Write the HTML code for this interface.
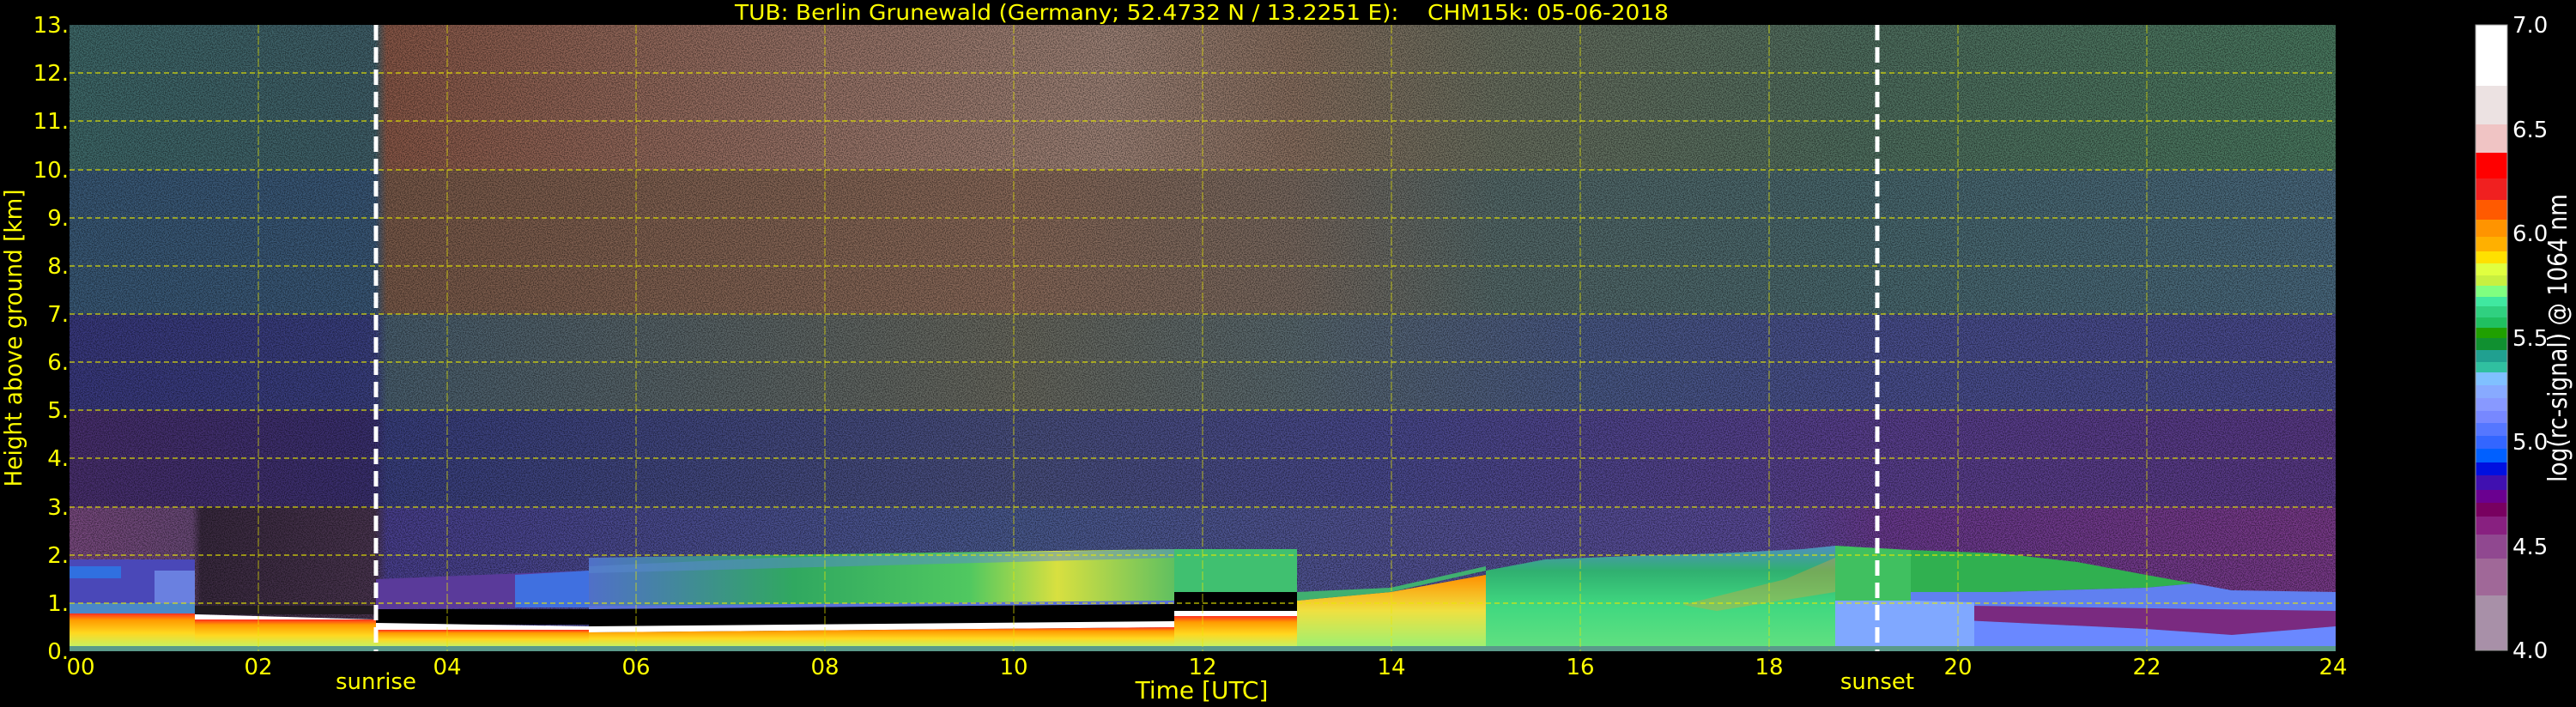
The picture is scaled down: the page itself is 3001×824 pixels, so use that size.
<!DOCTYPE html>
<html><head><meta charset="utf-8"><style>
html,body{margin:0;padding:0;background:#000;width:3001px;height:824px;overflow:hidden}
svg{display:block}
text{font-family:"DejaVu Sans","Liberation Sans",sans-serif}
</style></head><body>
<svg width="3001" height="824" viewBox="0 0 3001 824" xmlns="http://www.w3.org/2000/svg">
<defs>
<linearGradient id="b1" x1="0" x2="1" y1="0" y2="0">
<stop offset="0" stop-color="#3f6a6a"/><stop offset=".135" stop-color="#40606a"/><stop offset=".14" stop-color="#8a5848"/><stop offset=".33" stop-color="#9a7468"/><stop offset=".46" stop-color="#a08478"/><stop offset=".54" stop-color="#8a7060"/><stop offset=".63" stop-color="#6a7060"/><stop offset=".79" stop-color="#507060"/><stop offset="1" stop-color="#4a7a60"/></linearGradient>
<linearGradient id="b2" x1="0" x2="1" y1="0" y2="0">
<stop offset="0" stop-color="#3a5a78"/><stop offset=".135" stop-color="#3a5878"/><stop offset=".14" stop-color="#7a5a4a"/><stop offset=".42" stop-color="#8a6a5a"/><stop offset=".54" stop-color="#7a6a60"/><stop offset=".63" stop-color="#556a6a"/><stop offset=".79" stop-color="#4a6a70"/><stop offset="1" stop-color="#4a6a80"/></linearGradient>
<linearGradient id="b3" x1="0" x2="1" y1="0" y2="0">
<stop offset="0" stop-color="#3a3a80"/><stop offset=".135" stop-color="#3a4080"/><stop offset=".14" stop-color="#4a6070"/><stop offset=".42" stop-color="#6a6a60"/><stop offset=".54" stop-color="#5a6a70"/><stop offset=".67" stop-color="#4a5a88"/><stop offset=".79" stop-color="#4a5090"/><stop offset="1" stop-color="#4a4a90"/></linearGradient>
<linearGradient id="b4" x1="0" x2="1" y1="0" y2="0">
<stop offset="0" stop-color="#4a3070"/><stop offset=".135" stop-color="#3a3070"/><stop offset=".14" stop-color="#3a4080"/><stop offset=".42" stop-color="#4a5080"/><stop offset=".58" stop-color="#4a4a90"/><stop offset=".79" stop-color="#5a4090"/><stop offset="1" stop-color="#5a3a88"/></linearGradient>
<linearGradient id="b5" x1="0" x2="1" y1="0" y2="0">
<stop offset="0" stop-color="#7a4a80"/><stop offset=".054" stop-color="#6a4a78"/><stop offset=".058" stop-color="#3a2a40"/><stop offset=".135" stop-color="#4a3550"/><stop offset=".14" stop-color="#4a4090"/><stop offset=".42" stop-color="#4a5a90"/><stop offset=".75" stop-color="#5a4a9a"/><stop offset=".8" stop-color="#6a3a90"/><stop offset="1" stop-color="#7a3a8a"/></linearGradient>
<linearGradient id="aer" x1="0" x2="0" y1="0" y2="1">
<stop offset="0" stop-color="#ff3020"/><stop offset=".2" stop-color="#ff9a00"/><stop offset=".6" stop-color="#ffd820"/><stop offset="1" stop-color="#c8f060"/></linearGradient>
<linearGradient id="aer2" x1="0" x2="0" y1="0" y2="1">
<stop offset="0" stop-color="#ff9000"/><stop offset=".5" stop-color="#f0e040"/><stop offset="1" stop-color="#a0f070"/></linearGradient>
<linearGradient id="grn" x1="0" x2="0" y1="0" y2="1">
<stop offset="0" stop-color="#5090c0"/><stop offset=".25" stop-color="#30b070"/><stop offset=".6" stop-color="#40d880"/><stop offset="1" stop-color="#60e080"/></linearGradient>
<linearGradient id="mid" x1="0" x2="1" y1="0" y2="0">
<stop offset="0" stop-color="#5070c8"/><stop offset=".35" stop-color="#30a860"/><stop offset=".65" stop-color="#50c860"/><stop offset=".8" stop-color="#d8e040"/><stop offset="1" stop-color="#60c060"/></linearGradient>
<filter id="nz" x="0" y="0" width="100%" height="100%"><feTurbulence type="fractalNoise" baseFrequency="0.8" numOctaves="1" seed="3"/><feColorMatrix values="0 0 0 0 0  0 0 0 0 0  0 0 0 0 0  0 0 0 -3 1.9"/></filter>
</defs>

<rect x="81" y="29" width="2640" height="169" fill="url(#b1)"/>
<rect x="81" y="198" width="2640" height="168" fill="url(#b2)"/>
<rect x="81" y="366" width="2640" height="112" fill="url(#b3)"/>
<rect x="81" y="478" width="2640" height="113" fill="url(#b4)"/>
<rect x="81" y="591" width="2640" height="168" fill="url(#b5)"/>
<rect x="81" y="29" width="2640" height="730" filter="url(#nz)" opacity="0.45"/>

<rect x="81" y="652" width="146" height="51" fill="#4a48b8"/>
<rect x="81" y="660" width="60" height="14" fill="#3070e0"/>
<rect x="180" y="665" width="47" height="38" fill="#6a80e0"/>
<rect x="81" y="703" width="146" height="12" fill="#4a88c8"/>
<rect x="81" y="715" width="146" height="38" fill="url(#aer)"/>
<rect x="227" y="706" width="211" height="10" fill="#201a20"/>
<polygon points="227,716 438,722 438,728 227,722" fill="#ffffff"/>
<rect x="227" y="722" width="211" height="31" fill="url(#aer)"/>
<polygon points="438,675 686,665 686,708 438,710" fill="#5a3a9a"/>
<polygon points="600,670 686,665 686,708 600,708" fill="#4070e0"/>
<rect x="438" y="710" width="248" height="18" fill="#000"/>
<polygon points="438,726 686,730 686,738 438,734" fill="#fff"/>
<rect x="438" y="734" width="248" height="19" fill="url(#aer)"/>
<polygon points="686,650 1368,640 1368,703 686,708" fill="url(#mid)"/>
<polygon points="686,660 900,650 1368,640 1368,650 686,668" fill="#5a8ad0" opacity=".5"/>
<polygon points="686,706 1368,700 1368,704 686,710" fill="#5a70d8"/>
<polygon points="686,710 1368,704 1368,727 686,733" fill="#000"/>
<polygon points="686,730 1368,724 1368,731 686,737" fill="#fff"/>
<polygon points="686,737 1368,731 1368,753 686,753" fill="url(#aer)"/>
<polygon points="1368,640 1511,640 1511,700 1368,700" fill="#40c070"/>
<rect x="1368" y="690" width="143" height="30" fill="#000"/>
<rect x="1368" y="712" width="143" height="6" fill="#fff"/>
<rect x="1368" y="718" width="143" height="35" fill="url(#aer)"/>
<polygon points="1511,700 1620,690 1731,670 1731,753 1511,753" fill="url(#aer2)"/>
<polygon points="1511,700 1620,690 1731,665 1731,660 1620,685 1511,690" fill="#40b070"/>
<polygon points="1731,665 1800,652 1900,648 2000,645 2100,640 2138,636 2138,753 1731,753" fill="url(#grn)"/>
<polygon points="1960,705 2080,675 2138,650 2138,690 2000,712" fill="#f0a030" opacity=".35"/>
<polygon points="2138,636 2226,641 2226,700 2138,700" fill="#40c060"/>
<rect x="2138" y="700" width="88" height="53" fill="#80a8ff"/>
<polygon points="2226,641 2330,645 2420,655 2500,670 2556,680 2500,685 2330,690 2226,690" fill="#30b050"/>
<polygon points="2226,690 2330,690 2500,685 2556,680 2600,688 2721,690 2721,715 2226,712" fill="#6080f0"/>
<polygon points="2226,705 2721,712 2721,730 2600,740 2500,733 2330,725 2226,720" fill="#7a2a80"/>
<polygon points="2226,720 2330,725 2500,733 2600,740 2721,730 2721,753 2226,753" fill="#6a88ff"/>
<polygon points="2226,700 2300,702 2300,753 2226,753" fill="#80a8ff"/>
<rect x="81" y="753" width="2640" height="6" fill="#5a9a8a"/>

<g stroke="#e8e800" stroke-width="1.2" stroke-dasharray="6,4" fill="none" opacity=".9">
<line x1="81" x2="2721" y1="703" y2="703"/><line x1="81" x2="2721" y1="647" y2="647"/>
<line x1="81" x2="2721" y1="591" y2="591"/><line x1="81" x2="2721" y1="534" y2="534"/>
<line x1="81" x2="2721" y1="478" y2="478"/><line x1="81" x2="2721" y1="422" y2="422"/>
<line x1="81" x2="2721" y1="366" y2="366"/><line x1="81" x2="2721" y1="310" y2="310"/>
<line x1="81" x2="2721" y1="254" y2="254"/><line x1="81" x2="2721" y1="198" y2="198"/>
<line x1="81" x2="2721" y1="141" y2="141"/><line x1="81" x2="2721" y1="85" y2="85"/>
</g>
<g stroke="#e8e800" stroke-width="1" stroke-dasharray="10,3" fill="none" opacity=".7">
<line x1="301" x2="301" y1="29" y2="759"/><line x1="521" x2="521" y1="29" y2="759"/>
<line x1="741" x2="741" y1="29" y2="759"/><line x1="961" x2="961" y1="29" y2="759"/>
<line x1="1181" x2="1181" y1="29" y2="759"/><line x1="1401" x2="1401" y1="29" y2="759"/>
<line x1="1621" x2="1621" y1="29" y2="759"/><line x1="1841" x2="1841" y1="29" y2="759"/>
<line x1="2061" x2="2061" y1="29" y2="759"/><line x1="2281" x2="2281" y1="29" y2="759"/>
<line x1="2501" x2="2501" y1="29" y2="759"/>
</g>
<g stroke="#fff" stroke-width="5" stroke-dasharray="18,8">
<line x1="438" x2="438" y1="29" y2="759"/><line x1="2187" x2="2187" y1="29" y2="759"/>
</g>

<g fill="#ffff00" font-size="26" text-anchor="end">
<text x="80" y="768">0.</text><text x="80" y="712">1.</text><text x="80" y="656">2.</text>
<text x="80" y="600">3.</text><text x="80" y="543">4.</text><text x="80" y="487">5.</text>
<text x="80" y="431">6.</text><text x="80" y="375">7.</text><text x="80" y="319">8.</text>
<text x="80" y="263">9.</text><text x="80" y="207">10.</text><text x="80" y="150">11.</text>
<text x="80" y="94">12.</text><text x="80" y="38">13.</text>
</g>
<g fill="#ffff00" font-size="26" text-anchor="middle">
<text x="94" y="786">00</text><text x="301" y="786">02</text><text x="521" y="786">04</text>
<text x="741" y="786">06</text><text x="961" y="786">08</text><text x="1181" y="786">10</text>
<text x="1401" y="786">12</text><text x="1621" y="786">14</text><text x="1841" y="786">16</text>
<text x="2061" y="786">18</text><text x="2281" y="786">20</text><text x="2501" y="786">22</text>
<text x="2718" y="786">24</text>
<text x="438" y="803">sunrise</text>
<text x="2187" y="803" font-family="Liberation Sans">sunset</text>
<text x="1400" y="814" font-family="Liberation Sans" font-size="28">Time [UTC]</text>
<text x="1400" y="23" font-size="25" textLength="1088" lengthAdjust="spacingAndGlyphs" xml:space="preserve">TUB: Berlin Grunewald (Germany; 52.4732 N / 13.2251 E):&#160;&#160;&#160;&#160;CHM15k: 05-06-2018</text>
</g>
<text transform="translate(25,394) rotate(-90)" fill="#ffff00" font-family="Liberation Sans" font-size="28" text-anchor="middle" textLength="347" lengthAdjust="spacingAndGlyphs">Height above ground [km]</text>

<g>
<rect x="2884" y="29" width="37" height="71" fill="#ffffff"/>
<rect x="2884" y="100" width="37" height="45" fill="#ece2e2"/>
<rect x="2884" y="145" width="37" height="33" fill="#f0c4c4"/>
<rect x="2884" y="178" width="37" height="30" fill="#ff0000"/>
<rect x="2884" y="208" width="37" height="25" fill="#f02020"/>
<rect x="2884" y="233" width="37" height="23" fill="#ff5a00"/>
<rect x="2884" y="256" width="37" height="20" fill="#ff9400"/>
<rect x="2884" y="276" width="37" height="17" fill="#ffb000"/>
<rect x="2884" y="293" width="37" height="14" fill="#ffe000"/>
<rect x="2884" y="307" width="37" height="14" fill="#e0ff40"/>
<rect x="2884" y="321" width="37" height="12" fill="#c8f040"/>
<rect x="2884" y="333" width="37" height="13" fill="#80ff80"/>
<rect x="2884" y="346" width="37" height="11" fill="#40e8a0"/>
<rect x="2884" y="357" width="37" height="13" fill="#30d080"/>
<rect x="2884" y="370" width="37" height="12" fill="#20c060"/>
<rect x="2884" y="382" width="37" height="12" fill="#20a000"/>
<rect x="2884" y="394" width="37" height="14" fill="#109030"/>
<rect x="2884" y="408" width="37" height="14" fill="#20a090"/>
<rect x="2884" y="422" width="37" height="12" fill="#30c0a0"/>
<rect x="2884" y="434" width="37" height="15" fill="#80c0ff"/>
<rect x="2884" y="449" width="37" height="15" fill="#88aaff"/>
<rect x="2884" y="464" width="37" height="15" fill="#8899ff"/>
<rect x="2884" y="479" width="37" height="14" fill="#7788ff"/>
<rect x="2884" y="493" width="37" height="15" fill="#5577ff"/>
<rect x="2884" y="508" width="37" height="15" fill="#3366ff"/>
<rect x="2884" y="523" width="37" height="16" fill="#0060ff"/>
<rect x="2884" y="539" width="37" height="15" fill="#0010e0"/>
<rect x="2884" y="554" width="37" height="17" fill="#4010b0"/>
<rect x="2884" y="571" width="37" height="15" fill="#6a0090"/>
<rect x="2884" y="586" width="37" height="16" fill="#780060"/>
<rect x="2884" y="602" width="37" height="21" fill="#882080"/>
<rect x="2884" y="623" width="37" height="28" fill="#904890"/>
<rect x="2884" y="651" width="37" height="43" fill="#a06898"/>
<rect x="2884" y="694" width="37" height="64" fill="#a890a8"/>
<rect x="2884" y="29" width="37" height="729" fill="none" stroke="#999" stroke-width="1"/>
</g>
<g fill="#ffffff" font-size="26">
<text x="2927" y="38">7.0</text><text x="2927" y="160">6.5</text><text x="2927" y="281">6.0</text>
<text x="2927" y="403">5.5</text><text x="2927" y="524">5.0</text><text x="2927" y="646">4.5</text>
<text x="2927" y="767">4.0</text>
</g>
<text transform="translate(2990,394) rotate(-90)" fill="#ffffff" font-family="Liberation Sans" font-size="30" text-anchor="middle" textLength="336" lengthAdjust="spacingAndGlyphs">log(rc-signal) @ 1064 nm</text>
</svg>
</body></html>
